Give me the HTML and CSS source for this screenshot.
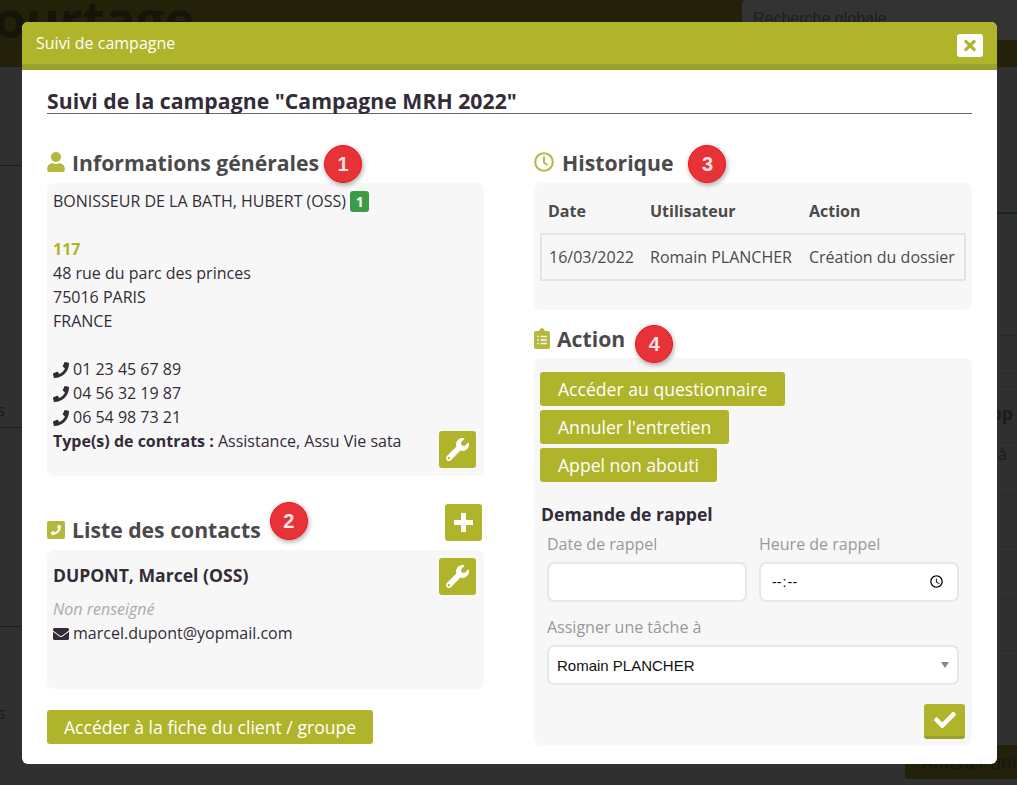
FILE: index.html
```html
<!DOCTYPE html>
<html lang="fr">
<head>
    <meta charset="UTF-8">
    <meta name="viewport" content="width=device-width, initial-scale=1.0">
    <title>Suivi de campagne</title>
    <link rel="stylesheet" href="styles.css">
</head>
<body>
    <svg class="icon-defs" aria-hidden="true">
        <symbol id="i-phone" viewBox="0 0 512 512"><path d="M493.4 24.6l-104-24c-11.3-2.6-22.9 3.3-27.5 13.9l-48 112c-4.2 9.8-1.4 21.3 6.9 28l60.6 49.6c-36 76.7-98.9 140.5-177.2 177.2l-49.6-60.6c-6.8-8.3-18.2-11.1-28-6.9l-112 48C3.9 366.5-2 378.1.6 389.4l24 104C27.1 504.2 36.7 512 48 512c256.1 0 464-207.5 464-464 0-11.2-7.7-20.9-18.6-23.4z"/></symbol>
        <symbol id="i-wrench" viewBox="0 0 512 512"><path d="M507.73 109.1c-2.24-9.03-13.54-12.09-20.12-5.51l-74.36 74.36-67.88-11.31-11.31-67.88 74.36-74.36c6.62-6.62 3.43-17.9-5.66-20.16-47.38-11.74-99.55.91-136.58 37.93-39.64 39.64-50.55 97.1-34.05 147.2L18.74 402.76c-24.99 24.99-24.99 65.51 0 90.5 24.99 24.99 65.51 24.99 90.5 0l213.21-213.21c50.12 16.71 107.47 5.68 147.37-34.22 37.07-37.07 49.7-89.32 37.91-136.73zM64 472c-13.25 0-24-10.75-24-24 0-13.26 10.75-24 24-24s24 10.74 24 24c0 13.25-10.75 24-24 24z"/></symbol>
    </svg>

    <!-- page derriere la modale -->
    <div class="page">
        <header class="page-top">
            <div class="page-logo">Courtage</div>
            <div class="page-search">Recherche globale</div>
        </header>
        <div class="page-main">
            <div class="page-left">
                <div class="left-row row-a"></div>
                <div class="left-row row-b">s</div>
                <div class="left-row row-c"></div>
                <div class="left-row row-d">s</div>
            </div>
            <div class="page-right">
                <div class="right-row row-1"></div>
                <div class="right-row row-2"></div>
                <div class="right-row row-3"></div>
                <div class="right-row row-4"></div>
                <div class="right-row row-6"><b>Rapp</b></div>
                <div class="right-row row-7">t à</div>
                <div class="right-row row-8"></div>
                <div class="right-row row-8"></div>
                <div class="right-row row-8"></div>
                <button class="page-btn">Afficher uni</button>
            </div>
        </div>
    </div>

    <div class="modal">
        <div class="modal-header">
            <span>Suivi de campagne</span>
            <button class="modal-close" aria-label="Fermer">
                <svg viewBox="0 0 352 512"><path d="M242.72 256l100.07-100.07c12.28-12.28 12.28-32.19 0-44.48l-22.24-22.24c-12.28-12.28-32.19-12.28-44.48 0L176 189.28 75.93 89.21c-12.28-12.28-32.19-12.28-44.48 0L9.21 111.45c-12.28 12.28-12.28 32.19 0 44.48L109.28 256 9.21 356.07c-12.28 12.28-12.28 32.19 0 44.48l22.24 22.24c12.28 12.28 32.2 12.28 44.48 0L176 322.72l100.07 100.07c12.28 12.28 32.2 12.28 44.48 0l22.24-22.24c12.28-12.28 12.28-32.19 0-44.48L242.72 256z"/></svg>
            </button>
        </div>

        <div class="modal-body">
            <h3 class="modal-title">Suivi de la campagne "Campagne MRH 2022"</h3>

            <div class="columns">
                <div class="column">
                    <h4 class="heading">
                        <svg class="heading-icon icon-user" viewBox="0 0 448 512"><path d="M224 256c70.7 0 128-57.3 128-128S294.7 0 224 0 96 57.3 96 128s57.3 128 128 128zm89.6 32h-16.7c-22.2 10.2-46.9 16-72.9 16s-50.6-5.8-72.9-16h-16.7C60.2 288 0 348.2 0 422.4V464c0 26.5 21.5 48 48 48h352c26.5 0 48-21.5 48-48v-41.6c0-74.2-60.2-134.4-134.4-134.4z"/></svg>
                        Informations générales
                        <span class="marker marker-1">1</span>
                    </h4>
                    <div class="panel panel-info">
                        <div class="info-text">
                            <p>BONISSEUR DE LA BATH, HUBERT (OSS) <span class="count">1</span></p>
                            <p class="blank"></p>
                            <p class="ref">117</p>
                            <p>48 rue du parc des princes</p>
                            <p>75016 PARIS</p>
                            <p>FRANCE</p>
                            <p class="blank"></p>
                            <p><svg class="inline-icon"><use href="#i-phone"/></svg>01 23 45 67 89</p>
                            <p><svg class="inline-icon"><use href="#i-phone"/></svg>04 56 32 19 87</p>
                            <p><svg class="inline-icon"><use href="#i-phone"/></svg>06 54 98 73 21</p>
                            <p><strong>Type(s) de contrats :</strong> Assistance, Assu Vie sata</p>
                        </div>
                        <button class="square-btn info-btn"><svg><use href="#i-wrench"/></svg></button>
                    </div>

                    <div class="contacts-head">
                        <h4 class="heading">
                            <svg class="heading-icon icon-square" viewBox="0 0 18 18"><rect width="18" height="18" rx="2"/><svg x="4" y="4" width="10" height="10" class="icon-white"><use href="#i-phone"/></svg></svg>
                            Liste des contacts
                            <span class="marker marker-2">2</span>
                        </h4>
                        <button class="square-btn"><span class="plus"></span></button>
                    </div>
                    <div class="panel panel-contact">
                        <div>
                            <div class="contact-name">DUPONT, Marcel (OSS)</div>
                            <p class="contact-none">Non renseigné</p>
                            <p><svg class="inline-icon" viewBox="0 0 512 512"><path d="M502.3 190.8c3.9-3.1 9.7-.2 9.7 4.7V400c0 26.5-21.5 48-48 48H48c-26.5 0-48-21.5-48-48V195.6c0-5 5.7-7.8 9.7-4.7 22.4 17.4 52.1 39.5 154.1 113.6 21.1 15.4 56.7 47.8 92.2 47.6 35.7.3 72-32.8 92.3-47.6 102-74.1 131.6-96.3 154-113.7zM256 320c23.2.4 56.6-29.2 73.4-41.4 132.7-96.3 142.8-104.7 173.4-128.7 5.8-4.5 9.2-11.5 9.2-18.9v-19c0-26.5-21.5-48-48-48H48C21.5 64 0 85.5 0 112v19c0 7.4 3.4 14.3 9.2 18.9 30.6 23.9 40.7 32.4 173.4 128.7 16.8 12.2 50.2 41.8 73.4 41.4z"/></svg>marcel.dupont@yopmail.com</p>
                        </div>
                        <button class="square-btn"><svg><use href="#i-wrench"/></svg></button>
                    </div>

                    <button class="btn btn-client">Accéder à la fiche du client / groupe</button>
                </div>

                <div class="column">
                    <h4 class="heading">
                        <svg class="heading-icon icon-clock" viewBox="0 0 20 20"><circle cx="10" cy="10" r="8.8"/><path d="M10 4.5V10.5L13.5 13"/></svg>
                        Historique
                        <span class="marker marker-3">3</span>
                    </h4>
                    <div class="panel panel-history">
                        <table class="history">
                            <thead>
                                <tr><th class="col-date">Date</th><th class="col-user">Utilisateur</th><th>Action</th></tr>
                            </thead>
                            <tbody>
                                <tr><td>16/03/2022</td><td>Romain PLANCHER</td><td>Création du dossier</td></tr>
                            </tbody>
                        </table>
                    </div>

                    <h4 class="heading heading-action">
                        <svg class="heading-icon icon-list" viewBox="0 0 16 21"><path class="list-body" d="M2 3h3.2C5.5 1.4 6.6 0 8 0s2.5 1.4 2.8 3H14c1.1 0 2 .9 2 2v14c0 1.1-.9 2-2 2H2c-1.1 0-2-.9-2-2V5c0-1.1.9-2 2-2z"/><path class="list-lines" d="M3.2 8.5h1.6M6.5 8.5h6.3M3.2 12h1.6M6.5 12h6.3M3.2 15.5h1.6M6.5 15.5h6.3"/></svg>
                        Action
                        <span class="marker marker-4">4</span>
                    </h4>
                    <div class="panel panel-action">
                        <div class="action-btns">
                            <button class="btn">Accéder au questionnaire</button>
                            <button class="btn">Annuler l'entretien</button>
                            <button class="btn">Appel non abouti</button>
                        </div>

                        <div class="recall-title">Demande de rappel</div>
                        <div class="recall-form">
                            <div class="field">
                                <label for="date_rappel">Date de rappel</label>
                                <input type="text" id="date_rappel">
                            </div>
                            <div class="field">
                                <label for="heure_rappel">Heure de rappel</label>
                                <input type="time" id="heure_rappel">
                            </div>
                            <div class="field field-wide">
                                <label for="assigne">Assigner une tâche à</label>
                                <div class="select-wrap">
                                    <select id="assigne"><option>Romain PLANCHER</option></select>
                                </div>
                            </div>
                        </div>
                        <div class="submit-row">
                            <button class="check-btn" aria-label="Valider">
                                <svg viewBox="0 0 512 512"><path d="M173.898 439.404l-166.4-166.4c-9.997-9.997-9.997-26.206 0-36.204l36.203-36.204c9.997-9.998 26.207-9.998 36.204 0L192 312.69 432.095 72.596c9.997-9.997 26.207-9.997 36.204 0l36.203 36.204c9.997 9.997 9.997 26.206 0 36.204l-294.4 294.401c-9.998 9.997-26.207 9.997-36.204-.001z"/></svg>
                            </button>
                        </div>
                    </div>
                </div>
            </div>
        </div>
    </div>
</body>
</html>
```
FILE: styles.css
```css
* {
    box-sizing: border-box;
}
html, body {
    height: 100%;
}
body {
    font-family: "Open Sans", sans-serif;
    font-size: 16px;
    color: #332c38;
    background-color: #303030;
    margin: 0;
    overflow: hidden;
}
p {
    margin: 0;
}
.icon-defs {
    display: none;
}

/* page derriere la modale */
.page {
    height: 785px;
    overflow: hidden;
}
.page-top {
    height: 67px;
    background: #24210a;
    display: flex;
    justify-content: space-between;
}
.page-logo {
    font-weight: 700;
    font-size: 51px;
    line-height: 36px;
    height: 50px;
    margin-left: -38px;
    color: #161408;
    overflow: hidden;
}
.page-search {
    width: 275px;
    height: 40px;
    padding: 10px 11px;
    background: #333;
    border-radius: 4px 0 0 0;
    font-family: "Liberation Sans", sans-serif;
    color: #1e1e1e;
}
.page-main {
    display: flex;
    justify-content: space-between;
}
.page-left {
    width: 22px;
    overflow: hidden;
    color: #181818;
    font-size: 16px;
}
.left-row {
    border-bottom: 1px solid #1e1e1e;
    line-height: 20px;
    display: flex;
    align-items: flex-end;
    justify-content: flex-end;
    padding-bottom: 7px;
    padding-right: 17px;
}
.row-a { height: 99px; }
.row-b { height: 262px; }
.row-c { height: 199px; }
.row-d { height: 103px; border-bottom: 0; }
.page-right {
    width: 300px;
    color: #1c1c1c;
    font-size: 16px;
}
.right-row {
    border-bottom: 1px solid #292929;
    text-align: right;
    padding-right: 4px;
}
.row-1 { height: 147px; border-bottom: 2px solid #152a15; }
.row-2 { height: 122px; }
.row-3 { height: 38px; }
.row-4 { height: 13px; }
.row-6 { height: 56px; padding-top: 14px; font-size: 17.6px; }
.row-7 { height: 52px; padding-top: 0; padding-right: 10px; }
.row-8 { height: 52px; }
.page-btn {
    display: block;
    width: 112px;
    height: 34px;
    margin-top: 94px;
    margin-left: 188px;
    padding: 0 0 0 17px;
    border: none;
    border-radius: 4px 0 0 4px;
    background: #24210a;
    color: #151515;
    font: 17.6px "Open Sans", sans-serif;
    text-align: left;
    white-space: nowrap;
    overflow: hidden;
}

/* modale */
.modal {
    position: absolute;
    left: 22px;
    top: 22px;
    width: 975px;
    height: 742px;
    background: white;
    border-radius: 6px;
}
.modal-header {
    height: 48px;
    padding: 0 14px;
    display: flex;
    align-items: center;
    justify-content: space-between;
    background: #afb42b;
    border-bottom: 6px solid #9aa02a;
    border-radius: 6px 6px 0 0;
    color: white;
    font-size: 16px;
}
.modal-close {
    width: 26px;
    height: 23px;
    margin-top: 4px;
    padding: 0;
    border: none;
    border-radius: 3px;
    background: white;
    display: flex;
    align-items: center;
    justify-content: center;
}
.modal-close svg {
    width: 12px;
    height: 17px;
    fill: #afb42b;
}
.modal-body {
    padding: 19px 25px 0;
}
.modal-title {
    margin: 0 0 34px;
    font-size: 21.2px;
    line-height: 24px;
    font-weight: 700;
    letter-spacing: 0.04px;
    border-bottom: 1px solid #666;
    color: #332c38;
}
.columns {
    display: grid;
    grid-template-columns: 437px 438px;
    column-gap: 50px;
}

.heading {
    display: flex;
    align-items: center;
    height: 30px;
    margin: 0 0 5px;
    padding-bottom: 2px;
    font-size: 21.2px;
    font-weight: 700;
    color: #4a4a4a;
    white-space: nowrap;
}
.heading-icon {
    flex: none;
    fill: #b4b83c;
    margin-right: 7px;
}
.icon-user {
    width: 18px;
    height: 20px;
}
.icon-square {
    width: 18px;
    height: 18px;
    margin-top: 1px;
}
.icon-white {
    fill: white;
}
.icon-clock {
    width: 20px;
    height: 20px;
    margin-right: 8px;
    fill: none;
    stroke: #b4b83c;
    stroke-width: 2;
}
.icon-list {
    width: 16px;
    height: 21px;
    margin-top: 1px;
}
.list-lines {
    fill: none;
    stroke: #f7f7f7;
    stroke-width: 1.5;
}
.heading-action {
    margin-top: 14px;
    margin-bottom: 4px;
}
.marker {
    flex: none;
    width: 38px;
    height: 38px;
    margin: -10px 0 -14px 5px;
    display: flex;
    align-items: center;
    justify-content: center;
    border: 1px solid #f5121a;
    border-radius: 50%;
    background: #e73338;
    box-shadow: 1px 2px 5px rgba(0, 0, 0, 0.35);
    color: #fbe4e4;
    font-family: "Liberation Sans", sans-serif;
    font-size: 20px;
    font-weight: 700;
}
.marker-2 { margin-left: 9px; margin-top: -20px; margin-bottom: -4px; }
.marker-3 { margin-left: 15px; }
.marker-4 { margin-left: 10px; margin-top: -6px; margin-bottom: -18px; }

.panel {
    background: #f7f7f7;
    border-radius: 7px;
}
.panel-info {
    height: 293px;
    padding: 6px 8px 8px 6px;
    display: flex;
    justify-content: space-between;
    align-items: flex-end;
    font-size: 16px;
    line-height: 24px;
}
.info-text {
    align-self: flex-start;
}
.blank {
    height: 24px;
}
.ref {
    font-weight: 700;
    color: #afb42b;
}
.count {
    display: inline-block;
    width: 19px;
    height: 21px;
    border-radius: 3px;
    background: #3d9b46;
    color: white;
    font-weight: 700;
    font-size: 14px;
    line-height: 21px;
    text-align: center;
}
.inline-icon {
    width: 16px;
    height: 16px;
    margin-right: 4px;
    vertical-align: -3px;
    fill: #332c38;
}

.square-btn {
    flex: none;
    width: 37px;
    height: 37px;
    padding: 0;
    border: none;
    border-radius: 3px;
    background: #afb42b;
    display: flex;
    align-items: center;
    justify-content: center;
}
.square-btn svg {
    width: 23px;
    height: 23px;
    fill: white;
}
.plus {
    width: 19px;
    height: 19px;
    background:
        linear-gradient(white, white) center / 5px 100% no-repeat,
        linear-gradient(white, white) center / 100% 5px no-repeat;
    border-radius: 1px;
}

.contacts-head {
    height: 41px;
    margin-top: 28px;
    margin-bottom: 5px;
    padding-right: 2px;
    display: flex;
    justify-content: space-between;
}
.contacts-head .heading {
    align-self: flex-end;
    margin: 0;
}
.panel-contact {
    height: 139px;
    padding: 8px 8px 0 6px;
    display: flex;
    justify-content: space-between;
    align-items: flex-start;
    font-size: 16px;
    line-height: 24px;
}
.contact-name {
    font-size: 17.6px;
    font-weight: 700;
    line-height: 34px;
    margin-bottom: 5px;
}
.contact-none {
    font-style: italic;
    color: #aaa;
}

.btn {
    height: 34px;
    padding: 0 18px;
    border: none;
    border-radius: 3px;
    background: #afb42b;
    color: white;
    font-family: "Open Sans", sans-serif;
    font-size: 17.6px;
    white-space: nowrap;
}
.btn-client {
    display: block;
    margin-top: 21px;
    padding: 0 17px;
}

.panel-history {
    height: 127px;
    padding: 10px 6px;
}
.history {
    width: 426px;
    table-layout: fixed;
    border-collapse: collapse;
    font-size: 16px;
}
.history th {
    height: 41px;
    padding: 0 7px 4px;
    text-align: left;
    font-weight: 700;
    color: #4a4a4a;
}
.history td {
    height: 46px;
    padding: 0 7px;
    color: #4a4a4a;
    white-space: nowrap;
}
.history tbody tr {
    border: 2px solid #e4e4e8;
}
.col-date {
    width: 102px;
}
.col-user {
    width: 159px;
}

.panel-action {
    height: 387px;
    padding: 14px 7px 0 6px;
}
.action-btns {
    display: flex;
    flex-direction: column;
    align-items: flex-start;
    gap: 4px;
}
.recall-title {
    margin: 20px 0 6px 1px;
    font-weight: 700;
    font-size: 17.6px;
    line-height: 24px;
}
.recall-form {
    display: grid;
    grid-template-columns: 200px 200px;
    column-gap: 12px;
    row-gap: 13px;
    margin-left: 7px;
}
.field label {
    display: block;
    height: 30px;
    font-size: 16px;
    line-height: 24px;
    color: #999;
}
.field-wide {
    grid-column: 1 / 3;
}
.field input, .field select {
    display: block;
    width: 100%;
    height: 40px;
    padding: 0 8px;
    border: 2px solid #e6e6ec;
    border-radius: 7px;
    background: white;
    color: #111;
    font-family: "Liberation Sans", sans-serif;
    font-size: 15px;
    appearance: none;
}
.field input[type="time"] {
    padding: 0 10px;
    font-size: 14.4px;
}
.field input::-webkit-datetime-edit-ampm-field {
    display: none;
}
.select-wrap {
    position: relative;
}
.select-wrap::after {
    content: "";
    position: absolute;
    right: 10px;
    top: 17px;
    border-left: 4px solid transparent;
    border-right: 4px solid transparent;
    border-top: 6px solid #888;
}
.submit-row {
    display: flex;
    justify-content: flex-end;
    margin-top: 19px;
}
.check-btn {
    width: 41px;
    height: 35px;
    padding: 0;
    border: none;
    border-bottom: 3px solid #9aa02a;
    border-radius: 3px;
    background: #afb42b;
    display: flex;
    align-items: center;
    justify-content: center;
}
.check-btn svg {
    width: 22px;
    height: 22px;
    fill: white;
}
```
